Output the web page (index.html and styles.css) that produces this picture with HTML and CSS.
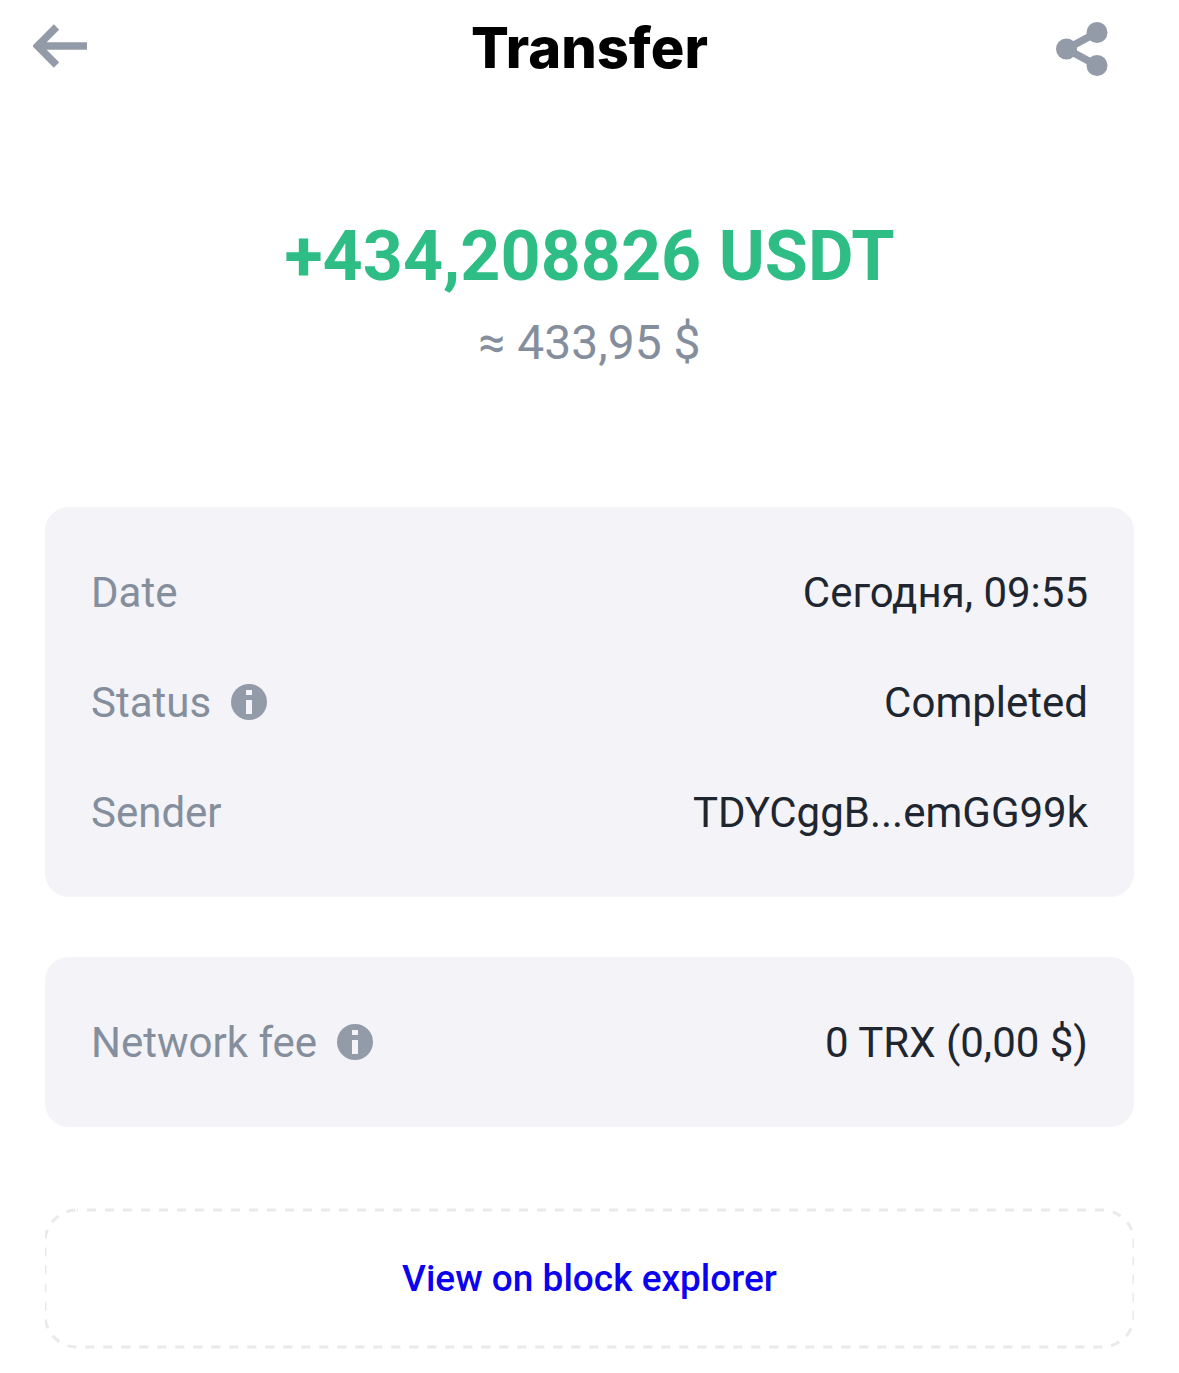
FILE: index.html
```html
<!DOCTYPE html>
<html lang="en">
<head>
<meta charset="UTF-8">
<meta name="viewport" content="width=device-width, initial-scale=1.0">
<title>Transfer</title>
<link rel="stylesheet" href="styles.css">
</head>
<body>
<header class="header">
  <button class="icon-button" aria-label="Back">
    <svg width="54" height="56" viewBox="0 0 54 56">
      <path d="M54 26H5M23.500 7L4.500 26l19 19" fill="none" stroke="#929ba7" stroke-width="7.500"/>
    </svg>
  </button>
  <h1 class="title">Transfer</h1>
  <button class="icon-button share" aria-label="Share">
    <svg width="52" height="56" viewBox="0 0 52 56">
      <path d="M41 12.500L10.500 29L41 45.500" fill="none" stroke="#929ba7" stroke-width="7.500"/>
      <g fill="#929ba7">
        <circle cx="10.500" cy="29" r="10.500"/>
        <circle cx="41" cy="12.500" r="10.500"/>
        <circle cx="41" cy="45.500" r="10.500"/>
      </g>
    </svg>
  </button>
</header>

<main class="content">
  <section class="summary">
    <p class="amount">+434,208826 USDT</p>
    <p class="fiat">≈ 433,95 $</p>
  </section>

  <dl class="card">
    <div class="row">
      <dt>Date</dt>
      <dd lang="ru">Сегодня, 09:55</dd>
    </div>
    <div class="row">
      <dt>Status
        <button class="info" aria-label="About status">
          <svg width="36" height="36" viewBox="0 0 36 36">
            <circle cx="18" cy="18" r="18" fill="#929ba7"/>
            <path d="M15 6h6v5h-6zM15 16h6v14h-6z" fill="#f3f3f8"/>
          </svg>
        </button>
      </dt>
      <dd>Completed</dd>
    </div>
    <div class="row">
      <dt>Sender</dt>
      <dd>TDYCggB...emGG99k</dd>
    </div>
  </dl>

  <dl class="card">
    <div class="row">
      <dt>Network fee
        <button class="info" aria-label="About network fee">
          <svg width="36" height="36" viewBox="0 0 36 36">
            <circle cx="18" cy="18" r="18" fill="#929ba7"/>
            <path d="M15 6h6v5h-6zM15 16h6v14h-6z" fill="#f3f3f8"/>
          </svg>
        </button>
      </dt>
      <dd>0 TRX (0,00 $)</dd>
    </div>
  </dl>

  <a class="explorer" href="#">
    <svg class="outline" aria-hidden="true">
      <rect class="dashes" rx="32"/>
    </svg>
    View on block explorer
  </a>
</main>
</body>
</html>
```
FILE: styles.css
```css
* {
  box-sizing: border-box;
}
body {
  margin: 0;
  background: #fff;
  color: #20262f;
  font-family: Roboto, "Noto Sans", sans-serif;
}
button {
  padding: 0;
  border: 0;
  background: none;
  cursor: pointer;
}
svg {
  display: block;
}

/* top bar */
.header {
  display: grid;
  grid-template-columns: 1fr auto 1fr;
  align-items: center;
  height: 96px;
  padding: 0 33px;
}
.icon-button {
  justify-self: start;
}
.share {
  justify-self: end;
  margin-right: 38px;
}
.title {
  margin: 0;
  color: #000;
  font-family: Inter, sans-serif;
  font-size: 56px;
  font-weight: 800;
}

.content {
  padding: 0 45px 24px;
}

/* amount */
.summary {
  padding: 112px 0 125px;
  text-align: center;
}
.amount {
  margin: 0;
  color: #2ebd85;
  font-size: 70px;
  font-weight: 700;
  line-height: 96px;
}
.fiat {
  margin: 0;
  color: #848e9c;
  font-size: 48px;
  line-height: 78px;
}

/* details */
.card {
  margin: 0 0 60px;
  padding: 30px 46px;
  border-radius: 24px;
  background: #f3f3f8;
  font-size: 42px;
}
.row {
  display: flex;
  justify-content: space-between;
  align-items: center;
  height: 110px;
}
.row dt {
  display: flex;
  align-items: center;
  gap: 20px;
  color: #848e9c;
}
.row dd {
  margin: 0;
}

/* explorer link */
.explorer {
  position: relative;
  display: flex;
  justify-content: center;
  align-items: center;
  height: 141px;
  margin-top: 81px;
  color: #0b00f0;
  font-size: 37px;
  font-weight: 500;
  text-decoration: none;
}
.outline {
  position: absolute;
  inset: 0;
  width: 100%;
  height: 100%;
}
.dashes {
  y: 2px;
  width: 100%;
  height: calc(100% - 4px);
  fill: none;
  stroke: #eaeaec;
  stroke-width: 3px;
  stroke-dasharray: 9 9;
  stroke-dashoffset: 8;
}
```
